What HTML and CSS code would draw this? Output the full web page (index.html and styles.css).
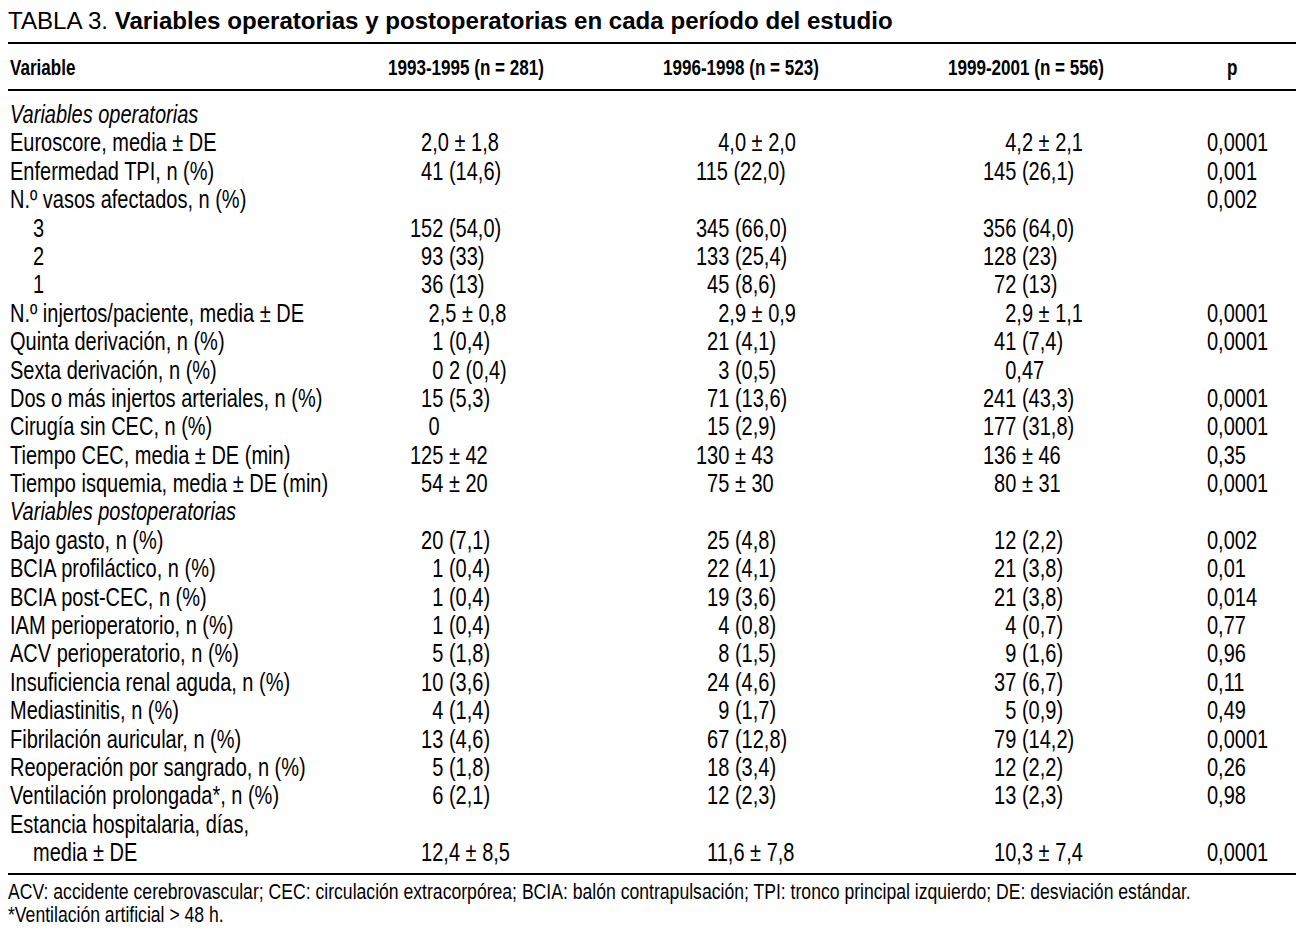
FILE: index.html
```html
<!DOCTYPE html>
<html lang="es">
<head>
<meta charset="utf-8">
<title>Tabla 3</title>
<link rel="stylesheet" href="styles.css">
</head>
<body>
<div class="page">
  <h1 class="title"><span class="title-num">TABLA 3.</span> <b>Variables operatorias y postoperatorias en cada período del estudio</b></h1>
  <div class="cond">
    <div class="table">
      <div class="row head">
        <div class="c1">Variable</div>
        <div class="c2">1993-1995 (n = 281)</div>
        <div class="c3">1996-1998 (n = 523)</div>
        <div class="c4">1999-2001 (n = 556)</div>
        <div class="c5">p</div>
      </div>
      <div class="body">
        <div class="row"><div class="c1 it">Variables operatorias</div></div>
        <div class="row"><div class="c1">Euroscore, media ± DE</div><div class="c2"><span class="d1">2,0 ± 1,8</span></div><div class="c3"><span class="d2">4,0 ± 2,0</span></div><div class="c4"><span class="d2">4,2 ± 2,1</span></div><div class="c5">0,0001</div></div>
        <div class="row"><div class="c1">Enfermedad TPI, n (%)</div><div class="c2"><span class="d1">41 (14,6)</span></div><div class="c3"><span>115 (22,0)</span></div><div class="c4"><span>145 (26,1)</span></div><div class="c5">0,001</div></div>
        <div class="row"><div class="c1">N.º vasos afectados, n (%)</div><div class="c2"></div><div class="c3"></div><div class="c4"></div><div class="c5">0,002</div></div>
        <div class="row"><div class="c1 sub">3</div><div class="c2"><span>152 (54,0)</span></div><div class="c3"><span>345 (66,0)</span></div><div class="c4"><span>356 (64,0)</span></div></div>
        <div class="row"><div class="c1 sub">2</div><div class="c2"><span class="d1">93 (33)</span></div><div class="c3"><span>133 (25,4)</span></div><div class="c4"><span>128 (23)</span></div></div>
        <div class="row"><div class="c1 sub">1</div><div class="c2"><span class="d1">36 (13)</span></div><div class="c3"><span class="d1">45 (8,6)</span></div><div class="c4"><span class="d1">72 (13)</span></div></div>
        <div class="row"><div class="c1">N.º injertos/paciente, media ± DE</div><div class="c2"><span class="dx">2,5 ± 0,8</span></div><div class="c3"><span class="d2">2,9 ± 0,9</span></div><div class="c4"><span class="d2">2,9 ± 1,1</span></div><div class="c5">0,0001</div></div>
        <div class="row"><div class="c1">Quinta derivación, n (%)</div><div class="c2"><span class="d2">1 (0,4)</span></div><div class="c3"><span class="d1">21 (4,1)</span></div><div class="c4"><span class="d1">41 (7,4)</span></div><div class="c5">0,0001</div></div>
        <div class="row"><div class="c1">Sexta derivación, n (%)</div><div class="c2"><span class="d2">0 2 (0,4)</span></div><div class="c3"><span class="d2">3 (0,5)</span></div><div class="c4"><span class="d2">0,47</span></div></div>
        <div class="row"><div class="c1">Dos o más injertos arteriales, n (%)</div><div class="c2"><span class="d1">15 (5,3)</span></div><div class="c3"><span class="d1">71 (13,6)</span></div><div class="c4"><span>241 (43,3)</span></div><div class="c5">0,0001</div></div>
        <div class="row"><div class="c1">Cirugía sin CEC, n (%)</div><div class="c2"><span class="dx">0</span></div><div class="c3"><span class="d1">15 (2,9)</span></div><div class="c4"><span>177 (31,8)</span></div><div class="c5">0,0001</div></div>
        <div class="row"><div class="c1">Tiempo CEC, media ± DE (min)</div><div class="c2"><span>125 ± 42</span></div><div class="c3"><span>130 ± 43</span></div><div class="c4"><span>136 ± 46</span></div><div class="c5">0,35</div></div>
        <div class="row"><div class="c1">Tiempo isquemia, media ± DE (min)</div><div class="c2"><span class="d1">54 ± 20</span></div><div class="c3"><span class="d1">75 ± 30</span></div><div class="c4"><span class="d1">80 ± 31</span></div><div class="c5">0,0001</div></div>
        <div class="row"><div class="c1 it">Variables postoperatorias</div></div>
        <div class="row"><div class="c1">Bajo gasto, n (%)</div><div class="c2"><span class="d1">20 (7,1)</span></div><div class="c3"><span class="d1">25 (4,8)</span></div><div class="c4"><span class="d1">12 (2,2)</span></div><div class="c5">0,002</div></div>
        <div class="row"><div class="c1">BCIA profiláctico, n (%)</div><div class="c2"><span class="d2">1 (0,4)</span></div><div class="c3"><span class="d1">22 (4,1)</span></div><div class="c4"><span class="d1">21 (3,8)</span></div><div class="c5">0,01</div></div>
        <div class="row"><div class="c1">BCIA post-CEC, n (%)</div><div class="c2"><span class="d2">1 (0,4)</span></div><div class="c3"><span class="d1">19 (3,6)</span></div><div class="c4"><span class="d1">21 (3,8)</span></div><div class="c5">0,014</div></div>
        <div class="row"><div class="c1">IAM perioperatorio, n (%)</div><div class="c2"><span class="d2">1 (0,4)</span></div><div class="c3"><span class="d2">4 (0,8)</span></div><div class="c4"><span class="d2">4 (0,7)</span></div><div class="c5">0,77</div></div>
        <div class="row"><div class="c1">ACV perioperatorio, n (%)</div><div class="c2"><span class="d2">5 (1,8)</span></div><div class="c3"><span class="d2">8 (1,5)</span></div><div class="c4"><span class="d2">9 (1,6)</span></div><div class="c5">0,96</div></div>
        <div class="row"><div class="c1">Insuficiencia renal aguda, n (%)</div><div class="c2"><span class="d1">10 (3,6)</span></div><div class="c3"><span class="d1">24 (4,6)</span></div><div class="c4"><span class="d1">37 (6,7)</span></div><div class="c5">0,11</div></div>
        <div class="row"><div class="c1">Mediastinitis, n (%)</div><div class="c2"><span class="d2">4 (1,4)</span></div><div class="c3"><span class="d2">9 (1,7)</span></div><div class="c4"><span class="d2">5 (0,9)</span></div><div class="c5">0,49</div></div>
        <div class="row"><div class="c1">Fibrilación auricular, n (%)</div><div class="c2"><span class="d1">13 (4,6)</span></div><div class="c3"><span class="d1">67 (12,8)</span></div><div class="c4"><span class="d1">79 (14,2)</span></div><div class="c5">0,0001</div></div>
        <div class="row"><div class="c1">Reoperación por sangrado, n (%)</div><div class="c2"><span class="d2">5 (1,8)</span></div><div class="c3"><span class="d1">18 (3,4)</span></div><div class="c4"><span class="d1">12 (2,2)</span></div><div class="c5">0,26</div></div>
        <div class="row"><div class="c1">Ventilación prolongada*, n (%)</div><div class="c2"><span class="d2">6 (2,1)</span></div><div class="c3"><span class="d1">12 (2,3)</span></div><div class="c4"><span class="d1">13 (2,3)</span></div><div class="c5">0,98</div></div>
        <div class="row"><div class="c1">Estancia hospitalaria, días,</div></div>
        <div class="row"><div class="c1 sub">media ± DE</div><div class="c2"><span class="d1">12,4 ± 8,5</span></div><div class="c3"><span class="d1">11,6 ± 7,8</span></div><div class="c4"><span class="d1">10,3 ± 7,4</span></div><div class="c5">0,0001</div></div>
      </div>
    </div>
    <div class="notes">
      <p>ACV: accidente cerebrovascular; CEC: circulación extracorpórea; BCIA: balón contrapulsación; TPI: tronco principal izquierdo; DE: desviación estándar.</p>
      <p>*Ventilación artificial &gt; 48 h.</p>
    </div>
  </div>
</div>
</body>
</html>
```

FILE: styles.css
```css
html, body {
  margin: 0;
  padding: 0;
  background: #ffffff;
  color: #000000;
}

.page {
  padding: 0 4px 0 8px;
  font-family: "Liberation Sans", Arial, sans-serif;
  overflow: hidden;
}

.title {
  margin: 7px 0 0 0;
  font-size: 24.1px;
  line-height: 28px;
  font-weight: normal;
  white-space: nowrap;
}

.title b {
  font-weight: bold;
}

/* Condensed face emulated: Liberation Sans drawn at 80% width */
.cond {
  width: 1610px;
  transform: scaleX(0.8);
  transform-origin: 0 0;
}

.table {
  margin-top: 7px;
  border-top: 2px solid #000;
  border-bottom: 2px solid #000;
}

.row {
  display: grid;
  grid-template-columns: 465px 350px 350px 325px 120px;
  white-space: nowrap;
}

.head {
  font-size: 21.3px;
  font-weight: bold;
  line-height: 24px;
  padding: 12px 0 9px 0;
  border-bottom: 2px solid #000;
}

.head .c1 { padding-left: 2.5px; }
.head .c2 { padding-left: 10px; }
.head .c3 { padding-left: 3.75px; }
.head .c4 { padding-left: 10px; }
.head .c5 { padding-left: 33.75px; }

.body {
  padding: 9px 0 6px 0;
  font-size: 25px;
}

.body .row {
  height: 28.4px;
  line-height: 28.4px;
}

.body .c1 { padding-left: 2.5px; }
.body .c2 { padding-left: 37.5px; }
.body .c3 { padding-left: 45px; }
.body .c4 { padding-left: 53.75px; }
.body .c5 { padding-left: 8.75px; }

.body .c1.sub { padding-left: 31.25px; }

.it {
  font-style: italic;
}

.d1 { padding-left: 0.556em; }
.d2 { padding-left: 1.112em; }
.dx { padding-left: 0.93em; }

.notes {
  margin-top: 5px;
  font-size: 22px;
  line-height: 23px;
}

.notes p {
  margin: 0;
  white-space: nowrap;
}
```
